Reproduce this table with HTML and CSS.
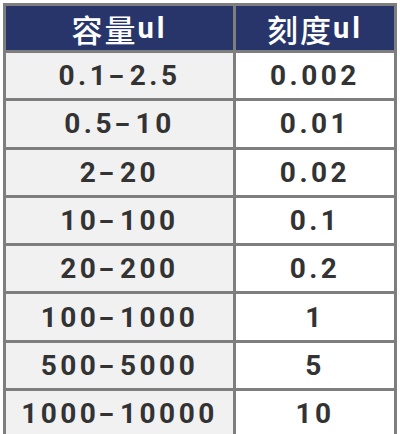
FILE: index.html
```html
<!DOCTYPE html>
<html>
<head>
<meta charset="utf-8">
<link rel="stylesheet" href="styles.css">
</head>
<body>
<div class="grid">
  <div class="cell head"><span class="cjk">容量</span><span class="lat">ul</span></div>
  <div class="cell head"><span class="cjk">刻度</span><span class="lat">ul</span></div>
  <div class="cell l">0.1<span class="dash">-</span>2.5</div><div class="cell r">0.002</div>
  <div class="cell l">0.5<span class="dash">-</span>10</div><div class="cell r">0.01</div>
  <div class="cell l">2<span class="dash">-</span>20</div><div class="cell r">0.02</div>
  <div class="cell l">10<span class="dash">-</span>100</div><div class="cell r">0.1</div>
  <div class="cell l">20<span class="dash">-</span>200</div><div class="cell r">0.2</div>
  <div class="cell l">100<span class="dash">-</span>1000</div><div class="cell r">1</div>
  <div class="cell l">500<span class="dash">-</span>5000</div><div class="cell r">5</div>
  <div class="cell l">1000<span class="dash">-</span>10000</div><div class="cell r">10</div>
</div>
</body>
</html>
```

FILE: styles.css
```css
html, body {
  margin: 0;
  padding: 0;
  background: #ffffff;
  overflow: hidden;
}
.grid {
  margin: 3px 0 0 3px;
  width: 394px;
  box-sizing: border-box;
  display: grid;
  grid-template-columns: 227px 158px;
  grid-template-rows: 44px repeat(8, 45.3px);
  gap: 3px;
  padding: 3px;
  background: #7e7e7e;
}
.cell {
  display: flex;
  align-items: center;
  justify-content: center;
  font-family: Roboto, "Liberation Sans", sans-serif;
  font-weight: 700;
  font-size: 28px;
  letter-spacing: 3.5px;
  color: #333333;
}
.dash {
  display: inline-block;
  margin: 0 3px 0 3px;
  transform: scaleX(1.6);
}
.head {
  background: #28356b;
  color: #ffffff;
}
.cjk {
  font-family: "Noto Sans CJK SC", sans-serif;
  font-weight: 500;
  font-size: 31px;
  letter-spacing: 2px;
}
.lat {
  font-size: 29px;
  letter-spacing: 3px;
}
.l {
  background: #f1f1f1;
}
.r {
  background: #ffffff;
}
```
